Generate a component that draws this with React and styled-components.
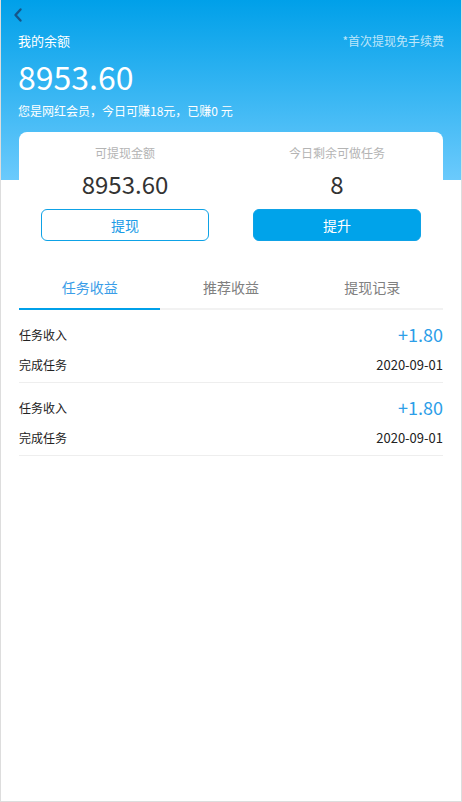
import React, { useState } from 'react';
import styled, { createGlobalStyle } from 'styled-components';

const GlobalStyle = createGlobalStyle`
  * { box-sizing: border-box; }
  body {
    margin: 0;
    background: #fff;
    font-family: "Noto Sans CJK SC", "Noto Sans", sans-serif;
  }
`;

const Page = styled.div`
  width: 462px;
  min-height: 802px;
  border: 1px solid #ddd;
  border-top: none;
  background: linear-gradient(180deg, #00a0e9 0%, #6bcafc 100%) no-repeat;
  background-size: 100% 180px;
  background-color: #fff;
`;

const NavBar = styled.div`
  height: 30px;
  display: flex;
  align-items: center;
  padding-left: 11px;
`;

const BackButton = styled.button`
  background: none;
  border: none;
  padding: 0;
  display: flex;
  cursor: pointer;
`;

const Header = styled.div`
  padding: 0 17px;
  color: #fff;
`;

const TitleRow = styled.div`
  display: flex;
  justify-content: space-between;
  align-items: center;
  height: 20px;
`;

const Title = styled.div`
  font-size: 13px;
`;

const Hint = styled.div`
  font-size: 12px;
  color: rgba(255, 255, 255, 0.72);
`;

const Balance = styled.div`
  margin-top: 6px;
  font-size: 32px;
  line-height: 40px;
`;

const Subtitle = styled.div`
  margin-top: 6px;
  font-size: 12px;
  line-height: 18px;
`;

const Content = styled.div`
  padding: 0 18px;
`;

const Card = styled.div`
  margin-top: 12px;
  background: #fff;
  border-radius: 8px 8px 0 0;
  padding: 12px 0 25px;
  display: grid;
  grid-template-columns: 1fr 1fr;
`;

const Stat = styled.div`
  display: flex;
  flex-direction: column;
  align-items: center;
  padding: 0 22px;
`;

const StatLabel = styled.div`
  font-size: 12px;
  line-height: 18px;
  color: #b4b4b4;
`;

const StatValue = styled.div`
  margin-top: 7px;
  font-size: 24px;
  line-height: 30px;
  color: #333;
`;

const ActionButton = styled.button`
  margin-top: 10px;
  width: 100%;
  height: 32px;
  border-radius: 6px;
  font-family: inherit;
  font-size: 14px;
  cursor: pointer;
  border: 1px solid #0ea2e6;
  background: ${p => (p.primary ? '#00a3ea' : '#fff')};
  color: ${p => (p.primary ? '#fff' : '#1a9be6')};
`;

const Tabs = styled.div`
  display: grid;
  grid-template-columns: repeat(3, 1fr);
`;

const Tab = styled.div`
  height: 44px;
  line-height: 42px;
  text-align: center;
  font-size: 14px;
  cursor: pointer;
  color: ${p => (p.active ? '#3a9de8' : '#808080')};
  border-bottom: 2px solid ${p => (p.active ? '#00a0e9' : '#f2f2f2')};
`;

const Item = styled.div`
  padding: 9px 0 3px;
  border-bottom: 1px solid #eee;
`;

const Row = styled.div`
  height: 30px;
  display: flex;
  justify-content: space-between;
  align-items: center;
  font-size: 12px;
  color: #222;
`;

const Amount = styled.span`
  font-size: 18px;
  color: #2d9ee8;
`;

const DateText = styled.span`
  font-size: 13px;
`;

const records = [
  { title: '任务收入', amount: '+1.80', desc: '完成任务', date: '2020-09-01' },
  { title: '任务收入', amount: '+1.80', desc: '完成任务', date: '2020-09-01' },
];

const tabs = ['任务收益', '推荐收益', '提现记录'];

export default function App() {
  const [active, setActive] = useState(0);

  return (
    <>
      <GlobalStyle />
      <Page>
        <NavBar>
          <BackButton aria-label="返回">
            <svg width="12" height="16" viewBox="0 0 12 16">
              <polyline
                points="8.5,2.5 3.5,8 8.5,13.5"
                fill="none"
                stroke="#15568a"
                strokeWidth="2.4"
                strokeLinecap="round"
                strokeLinejoin="round"
              />
            </svg>
          </BackButton>
        </NavBar>
        <Header>
          <TitleRow>
            <Title>我的余额</Title>
            <Hint>*首次提现免手续费</Hint>
          </TitleRow>
          <Balance>8953.60</Balance>
          <Subtitle>您是网红会员，今日可赚18元，已赚0 元</Subtitle>
        </Header>
        <Content>
          <Card>
            <Stat>
              <StatLabel>可提现金额</StatLabel>
              <StatValue>8953.60</StatValue>
              <ActionButton>提现</ActionButton>
            </Stat>
            <Stat>
              <StatLabel>今日剩余可做任务</StatLabel>
              <StatValue>8</StatValue>
              <ActionButton primary>提升</ActionButton>
            </Stat>
          </Card>
          <Tabs>
            {tabs.map((t, i) => (
              <Tab key={t} active={i === active} onClick={() => setActive(i)}>
                {t}
              </Tab>
            ))}
          </Tabs>
          {records.map((r, i) => (
            <Item key={i}>
              <Row>
                <span>{r.title}</span>
                <Amount>{r.amount}</Amount>
              </Row>
              <Row>
                <span>{r.desc}</span>
                <DateText>{r.date}</DateText>
              </Row>
            </Item>
          ))}
        </Content>
      </Page>
    </>
  );
}
